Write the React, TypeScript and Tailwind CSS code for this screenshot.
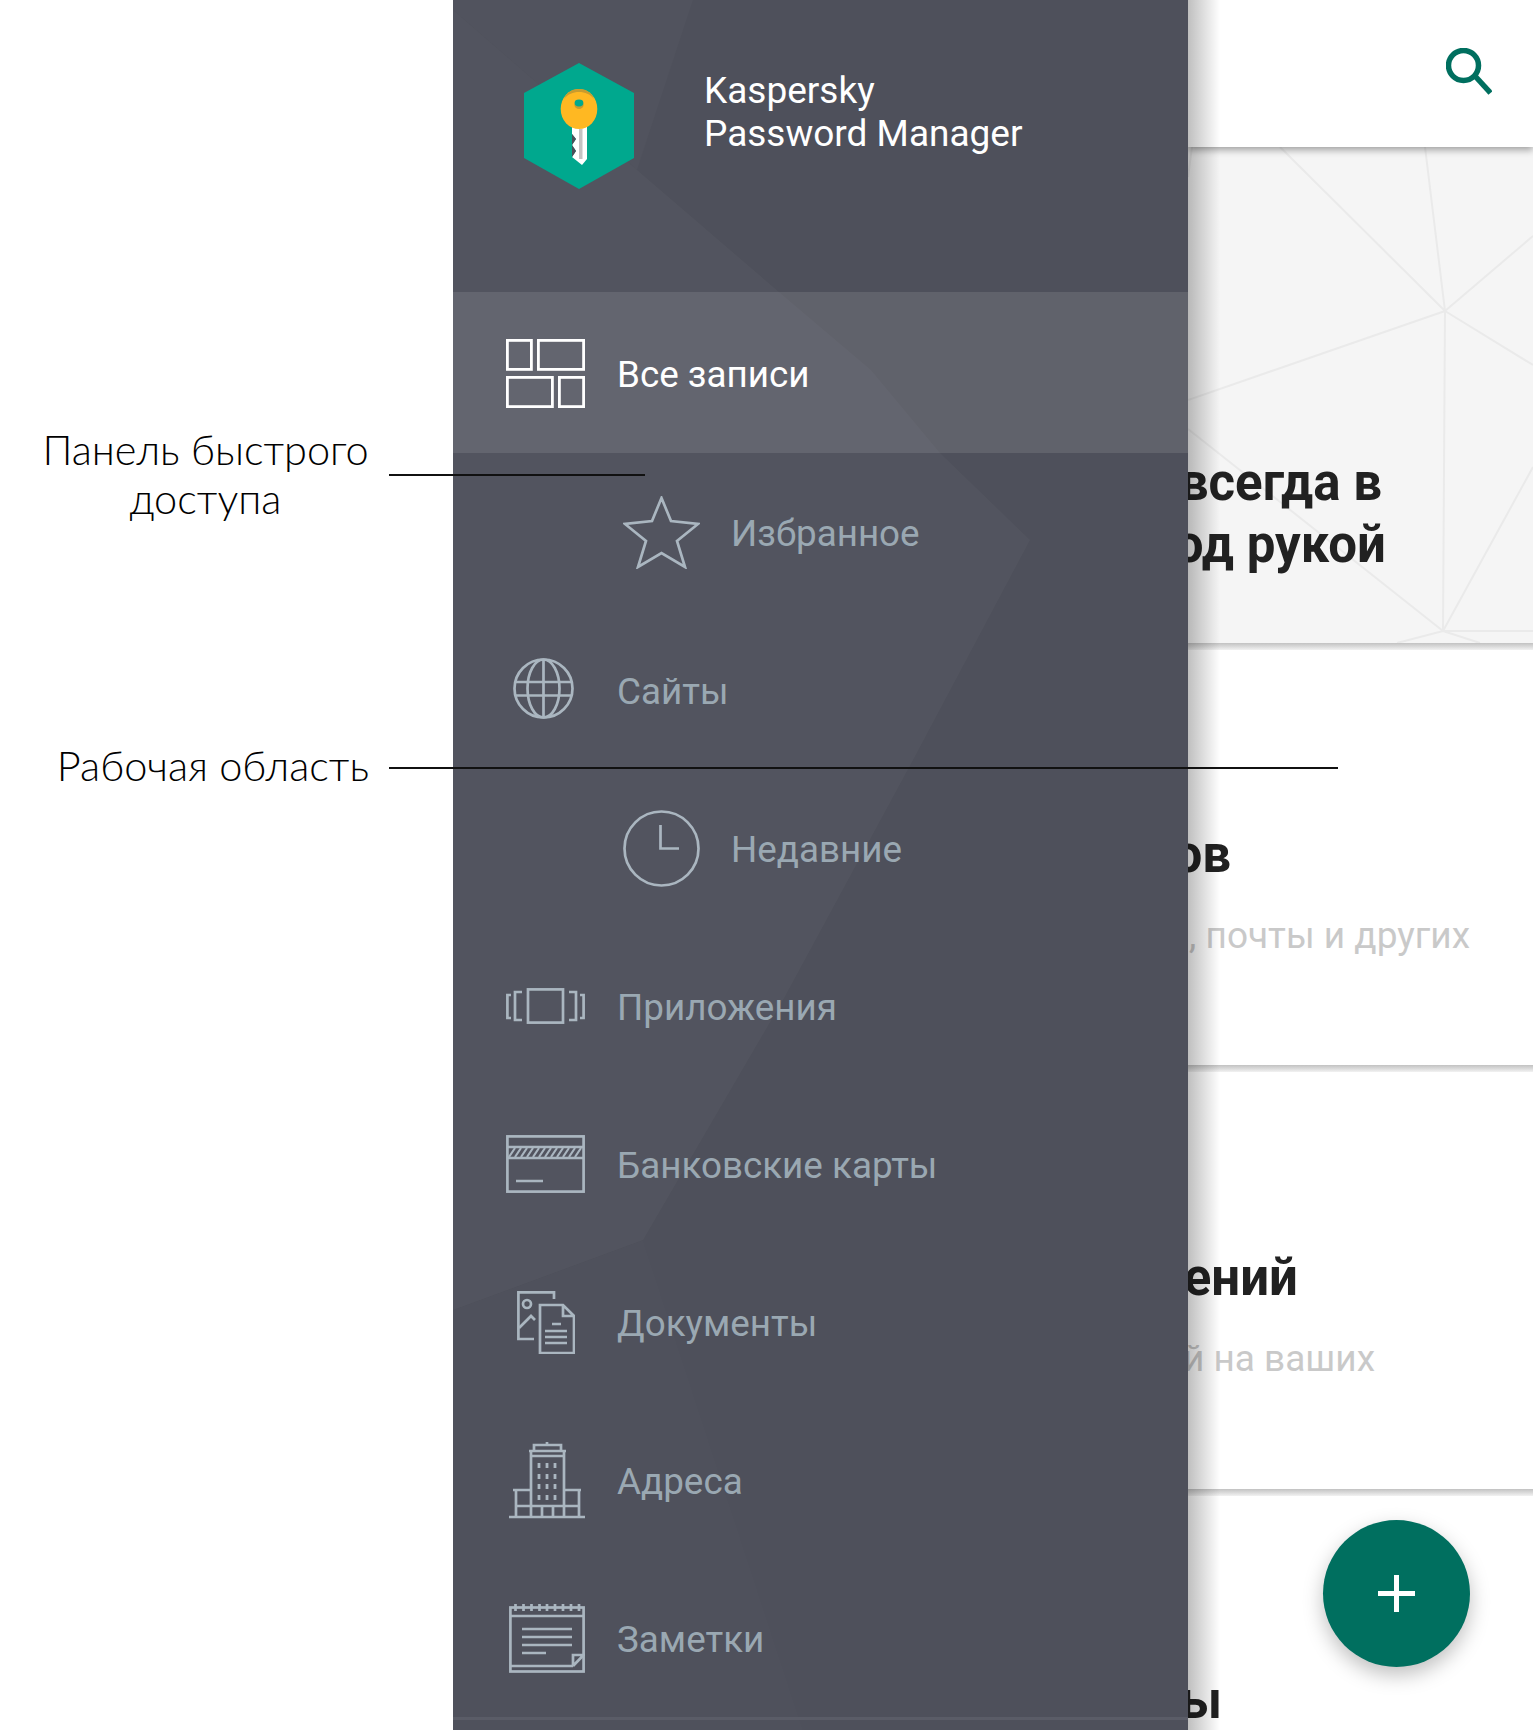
import React from "react";

const s = { fill: "none", stroke: "currentColor", strokeWidth: 2.7 };

function IconGrid() {
  return (
    <svg width="79" height="69" viewBox="0 0 79 69" {...s} strokeWidth={2.8}>
      <rect x="1.4" y="1.4" width="24" height="29" />
      <rect x="32.4" y="1.4" width="45.2" height="29" />
      <rect x="1.4" y="38.4" width="45" height="29.2" />
      <rect x="53.4" y="38.4" width="24.2" height="29.2" />
    </svg>
  );
}
function IconStar() {
  return (
    <svg width="77" height="73" viewBox="0 0 77 73" {...s}>
      <path d="M38.5 2 L48 25 L75 28 L54 45 L62 71 L38.5 57 L15 71 L23 45 L2 28 L29 25 Z" />
    </svg>
  );
}
function IconGlobe() {
  return (
    <svg width="61" height="61" viewBox="0 0 61 61" {...s}>
      <circle cx="30.5" cy="30.5" r="29" />
      <ellipse cx="30.5" cy="30.5" rx="16" ry="29" />
      <path d="M30.5 1.5 V59.5 M2.5 24 H58.5 M2.5 37.5 H58.5" />
    </svg>
  );
}
function IconClock() {
  return (
    <svg width="77" height="77" viewBox="0 0 77 77" {...s}>
      <circle cx="38.5" cy="38.5" r="37" />
      <path d="M37.5 15 V38.5 H56" />
    </svg>
  );
}
function IconApps() {
  return (
    <svg width="79" height="36" viewBox="0 0 79 36" {...s}>
      <rect x="22" y="1.4" width="35" height="33.2" />
      <path d="M16 4 H9 V32 H16 M5 7 H1.4 V30 H5 M63 4 H70 V32 H63 M74 7 H77.6 V30 H74" />
    </svg>
  );
}
function IconCard() {
  return (
    <svg width="79" height="58" viewBox="0 0 79 58" {...s}>
      <rect x="1.4" y="1.4" width="76.2" height="55.2" />
      <path d="M1.4 12 H77.6 M1.4 23 H77.6 M10 46 H37" />
      <path
        strokeWidth={2.2}
        d="M3 22 L9 13 M9 22 L15 13 M15 22 L21 13 M21 22 L27 13 M27 22 L33 13 M33 22 L39 13 M39 22 L45 13 M45 22 L51 13 M51 22 L57 13 M57 22 L63 13 M63 22 L69 13 M69 22 L75 13"
      />
    </svg>
  );
}
function IconDocs() {
  return (
    <svg width="58" height="63" viewBox="0 0 58 63" {...s}>
      <path d="M37 8 V1.4 H1.4 V48 H17" />
      <circle cx="10" cy="13" r="4" />
      <path d="M2 37 L14 25 L18 29" />
      <path d="M23 14 H46 L57 25 V62 H23 Z M46 14 V25 H57" />
      <path d="M35 33 H44 M28 40 H50 M28 46 H50 M28 52 H50" />
    </svg>
  );
}
function IconBuilding() {
  return (
    <svg width="76" height="77" viewBox="0 0 76 77" {...s}>
      <path d="M0 75 H76 M22 9 V75 M55 9 V75 M20 9 H57 M22 14 H55 M25 9 V3 H52 V9 M38 0 V3" />
      <path d="M4 48 H22 M55 48 H72 M7 48 V75 M70 48 V75 M7 64 H70 M33 64 V75 M44 64 V75" />
      <path
        strokeWidth={2.8}
        d="M30 21 V26 M38 21 V26 M46 21 V26 M30 32 V37 M38 32 V37 M46 32 V37 M30 42 V47 M38 42 V47 M46 42 V47 M30 53 V58 M38 53 V58 M46 53 V58"
      />
    </svg>
  );
}
function IconNotes() {
  return (
    <svg width="76" height="69" viewBox="0 0 76 69" {...s}>
      <rect x="1.4" y="3.5" width="73.2" height="64" />
      <path d="M1.4 12 H74.6 M1.4 62 H64 M64 62 V51 H74.6 L64 62" />
      <path d="M6.5 0 V7 M14.5 0 V7 M22.5 0 V7 M30.5 0 V7 M38 0 V7 M46 0 V7 M54 0 V7 M62 0 V7 M70 0 V7" />
      <path d="M13 25 H63 M13 33 H63 M13 41 H63 M13 49 H37" />
    </svg>
  );
}
function Logo() {
  return (
    <svg width="110" height="126" viewBox="0 0 110 126">
      <polygon points="55,0 110,30 110,95 55,126 0,95 0,30" fill="#00a88e" />
      <path d="M48 62 H63 V96 L58 102 L48 94 L52 88 L48 82 L52 76 L48 71 Z" fill="#ffffff" />
      <rect x="55" y="66" width="3.5" height="30" fill="#c4c4c4" />
      <path d="M48 71 L52 76 L48 82 L52 88 L48 94 Z" fill="#4c4e58" />
      <ellipse cx="55" cy="46" rx="18.3" ry="20" fill="#ffb822" />
      <path d="M40 36 C43 29 48 26 55 26 C62 26 67 29 70 36 C66 31 61 29 55 29 C49 29 44 31 40 36 Z" fill="#c99b2e" />
      <ellipse cx="55" cy="42" rx="4.6" ry="4" fill="#c99b2e" />
      <ellipse cx="55" cy="40" rx="4.4" ry="3.4" fill="#00a88e" />
    </svg>
  );
}

const rows: { label: string; Icon: React.FC; shift?: boolean; end?: boolean; start?: boolean }[] = [
  { label: "Избранное", Icon: IconStar, shift: true },
  { label: "Сайты", Icon: IconGlobe, start: true },
  { label: "Недавние", Icon: IconClock, shift: true },
  { label: "Приложения", Icon: IconApps },
  { label: "Банковские карты", Icon: IconCard },
  { label: "Документы", Icon: IconDocs },
  { label: "Адреса", Icon: IconBuilding, end: true },
  { label: "Заметки", Icon: IconNotes, end: true },
];

function DrawerRow({ label, Icon, shift, end, start }: { label: string; Icon: React.FC; shift?: boolean; end?: boolean; start?: boolean }) {
  if (shift) {
    return (
      <div className="flex h-[158px] items-center pl-[170px]">
        <div className="flex w-[77px] justify-center text-[#aab6c0]">
          <Icon />
        </div>
        <span className="ml-[31px] pt-[4px] text-[36.8px] text-[#9aa8b2]">{label}</span>
      </div>
    );
  }
  return (
    <div className="flex h-[158px] items-center pl-[53px]">
      <div className={`flex w-[79px] text-[#aab6c0] ${end ? "justify-end" : "justify-center"}`}>
        <div className={start ? "mb-[4px] mr-[4px]" : ""}>
          <Icon />
        </div>
      </div>
      <span className="ml-[32px] pt-[4px] text-[36.8px] text-[#9aa8b2]">{label}</span>
    </div>
  );
}

function ClippedLine({ text, right, cls }: { text: string; right: string; cls: string }) {
  return (
    <div className={`flex justify-end whitespace-nowrap ${right} ${cls}`}>
      <span className="shrink-0">{text}</span>
    </div>
  );
}

function Strip() {
  return <div className="h-[7px] bg-gradient-to-b from-[#c2c2c2] to-[#f2f2f2]" />;
}

export default function App() {
  return (
    <div className="relative flex h-[1730px] w-[1533px] overflow-hidden bg-white font-['Roboto',sans-serif]">
      <aside className="w-[453px] shrink-0 font-['Lato','Noto_Sans',sans-serif] text-[41.5px] font-light leading-[49px] text-black">
        <div className="w-[411px] pt-[425px] text-center">
          <div>Панель быстрого</div>
          <div>доступа</div>
        </div>
        <div className="mt-[218px] w-[369px] text-right whitespace-nowrap">Рабочая область</div>
      </aside>

      <nav className="relative z-10 w-[735px] shrink-0 overflow-hidden bg-[#4e505b]">
        <svg className="absolute inset-0" width="735" height="1730" viewBox="0 0 735 1730">
          <polygon points="0,10 184,170 326,292 418,370 487,453 577,540 460,760 330,1000 190,1240 0,1310" fill="#ffffff" fillOpacity="0.027" />
          <polygon points="184,170 240,0 0,0 0,10" fill="#ffffff" fillOpacity="0.02" />
          <polygon points="190,1240 350,1730 0,1730 0,1310" fill="#ffffff" fillOpacity="0.008" />
        </svg>
        <div className="relative">
          <header className="flex h-[292px] pl-[71px] pt-[63px]">
            <Logo />
            <div className="ml-[70px] pt-[6px] text-[37px] leading-[43px] text-white">
              <div>Kaspersky</div>
              <div>Password Manager</div>
            </div>
          </header>
          <div className="flex h-[161px] items-center bg-white/10 pl-[53px] text-white">
            <div className="pt-[1px]">
              <IconGrid />
            </div>
            <span className="ml-[32px] pt-[4px] text-[36.8px]">Все записи</span>
          </div>
          {rows.map((r) => (
            <DrawerRow key={r.label} label={r.label} Icon={r.Icon} shift={r.shift} end={r.end} start={r.start} />
          ))}
          <div className="h-[3px] bg-[#5a5c67]" />
        </div>
      </nav>

      <main className="relative w-[345px] shrink-0 overflow-hidden">
        <div className="relative z-[2] flex h-[147px] items-start justify-end bg-white pr-[41px] pt-[48px] shadow-[0_3px_7px_rgba(0,0,0,0.35)]">
          <svg width="46" height="47" viewBox="0 0 46 47" fill="none" stroke="#006f5f" strokeWidth="5.5">
            <circle cx="17.5" cy="17.5" r="15" />
            <path d="M29 28 L44.5 45" />
          </svg>
        </div>
        <section className="relative h-[496px] bg-[#f5f5f5]">
          <svg className="absolute inset-0" width="345" height="496" viewBox="0 0 345 496" fill="none" stroke="#eaeaea" strokeWidth="2">
            <path d="M92 0 L257 164 M237 0 L257 164 M345 89 L257 164 M345 218 L257 164 M0 253 L257 164 M257 164 L255 484 M0 282 L255 484 M345 320 L255 484 M209 496 L255 484 L345 484 M255 484 L292 496 M4 0 L0 30" />
          </svg>
          <div className="relative pt-[305px] text-[51px] font-bold leading-[62px] text-[#212121]">
            <ClippedLine text="всегда в" right="pr-[151px]" cls="" />
            <ClippedLine text="од рукой" right="pr-[147px]" cls="" />
          </div>
        </section>
        <section className="h-[422px]">
          <Strip />
          <div className="pt-[174px]">
            <ClippedLine text="ов" right="pr-[302px]" cls="text-[51px] font-bold leading-[62px] text-[#212121]" />
            <ClippedLine text=", почты и других" right="pr-[63px]" cls="mt-[28px] text-[37px] leading-[44px] text-[#c9c9c9]" />
          </div>
        </section>
        <section className="h-[424px]">
          <Strip />
          <div className="pt-[175px]">
            <ClippedLine text="ений" right="pr-[235px]" cls="text-[51px] font-bold leading-[62px] text-[#212121]" />
            <ClippedLine text="й на ваших" right="pr-[158px]" cls="mt-[28px] text-[37px] leading-[44px] text-[#c9c9c9]" />
          </div>
        </section>
        <section>
          <Strip />
          <div className="pt-[174px]">
            <ClippedLine text="ы" right="pr-[311px]" cls="text-[51px] font-bold leading-[62px] text-[#212121]" />
          </div>
        </section>
        <div className="absolute inset-y-0 left-0 z-[3] w-[32px] bg-gradient-to-r from-black/25 to-transparent" />
        <button className="absolute left-[135px] top-[1520px] z-[4] flex h-[147px] w-[147px] items-center justify-center rounded-full bg-[#006f5f] shadow-[0_8px_20px_rgba(0,0,0,0.25)]">
          <svg width="37" height="37" viewBox="0 0 37 37" fill="#ffffff">
            <rect x="0" y="16" width="37" height="5" />
            <rect x="16" y="0" width="5" height="37" />
          </svg>
        </button>
      </main>

      <div className="absolute left-[389px] top-[474px] z-20 h-[2px] w-[256px] bg-[#111111]" />
      <div className="absolute left-[389px] top-[767px] z-20 h-[2px] w-[949px] bg-[#111111]" />
    </div>
  );
}
